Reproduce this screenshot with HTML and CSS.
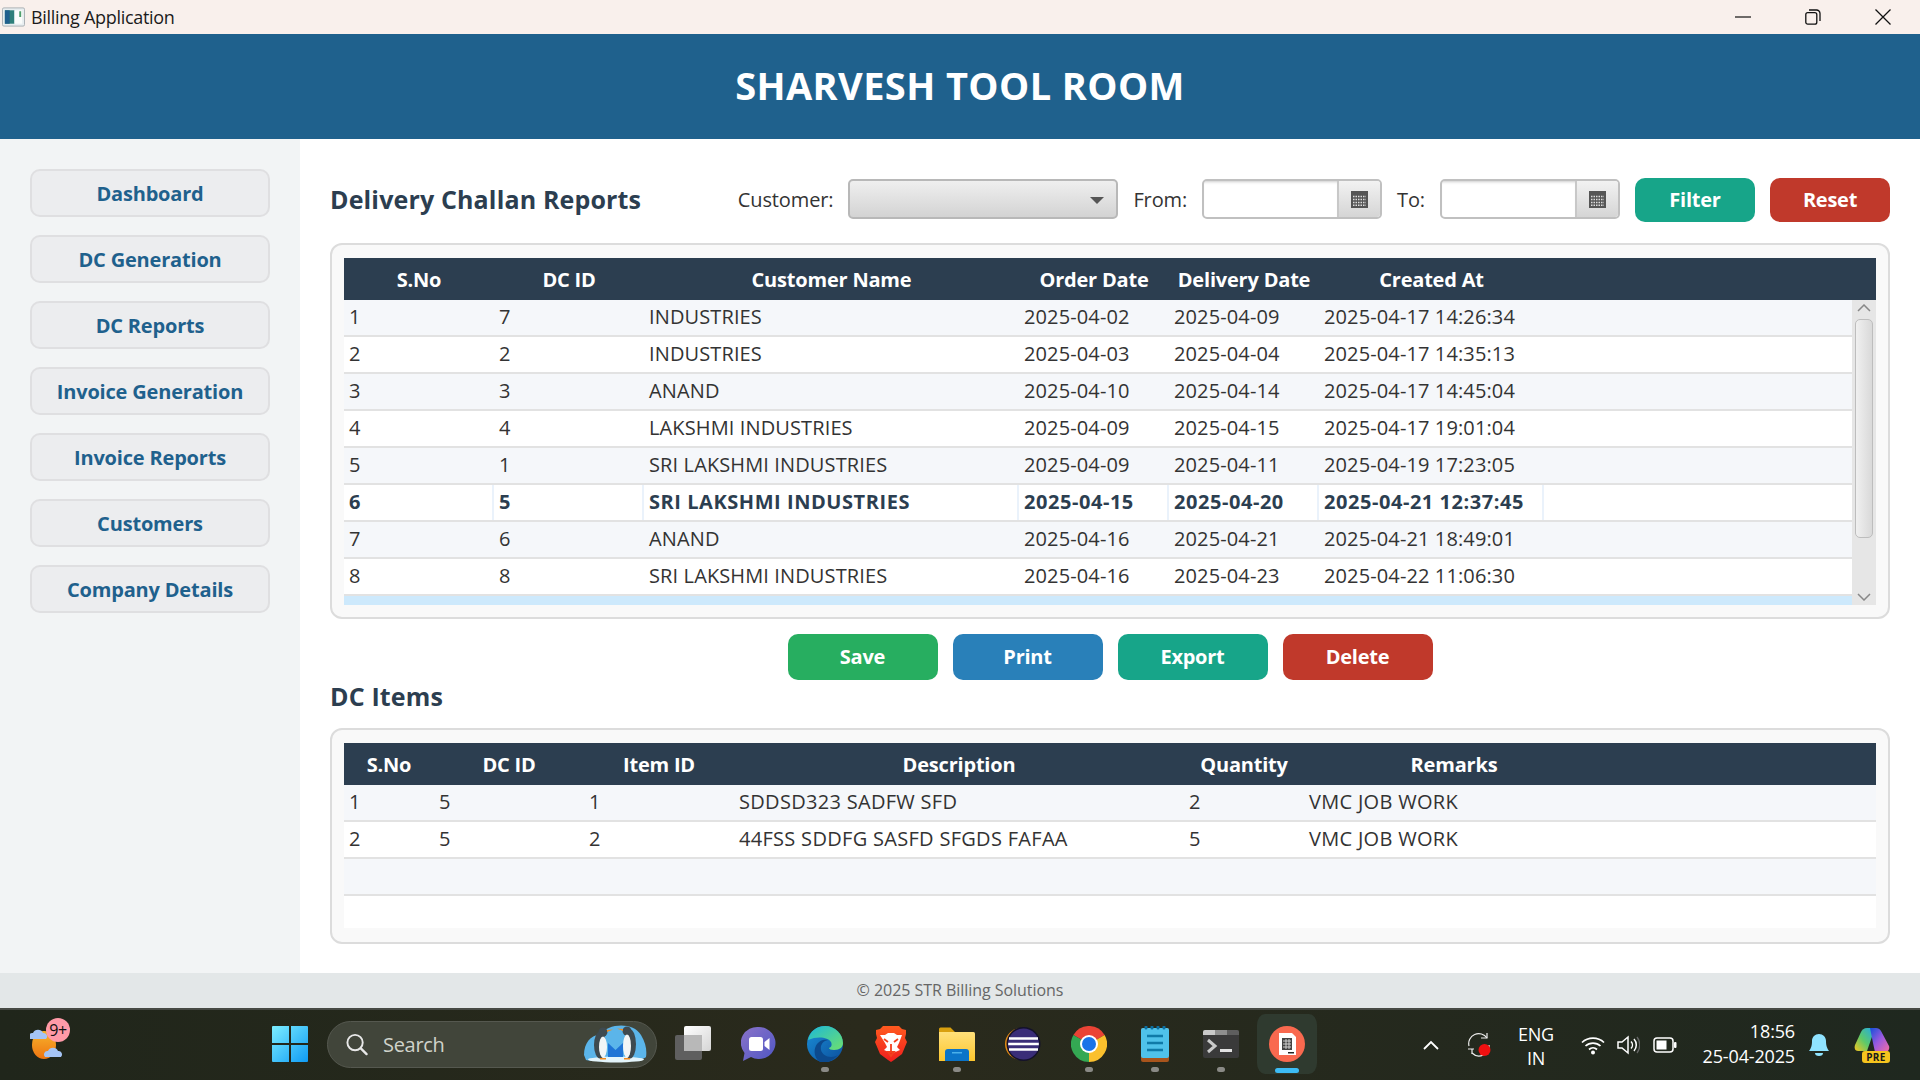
FILE: index.html
```html
<!DOCTYPE html>
<html lang="en">
<head>
<meta charset="utf-8">
<title>Billing Application</title>
<link rel="stylesheet" href="styles.css">
</head>
<body>
<div class="titlebar">
  <svg class="app-ico" viewBox="0 0 24 20"><rect x=".5" y=".5" width="23" height="19" rx="1.5" fill="#e8eef0" stroke="#a8b0b4"/><rect x="3" y="3" width="10" height="14" fill="#2f7f7a"/><rect x="3" y="3" width="5" height="14" fill="#1f5f8d"/><rect x="13" y="3" width="8" height="14" fill="#fbfdfb"/><rect x="18" y="4" width="2" height="6" fill="#4f9f6d"/></svg>
  <span class="app-name">Billing Application</span>
  <div class="win-ctrls">
    <svg class="win-ctrl" viewBox="0 0 16 16"><path d="M0 8h16" stroke="#111" stroke-width="1.2"/></svg>
    <svg class="win-ctrl" viewBox="0 0 16 16"><rect x=".8" y="3.6" width="11" height="11.6" rx="2" fill="none" stroke="#111" stroke-width="1.3"/><path d="M4 1h7.500A3.500 3.500 0 0 1 15 4.500V12" fill="none" stroke="#111" stroke-width="1.3"/></svg>
    <svg class="win-ctrl" viewBox="0 0 16 16"><path d="M.5.500l15 15M15.500.500l-15 15" stroke="#111" stroke-width="1.3"/></svg>
  </div>
</div>
<header class="banner"><span class="banner-text">SHARVESH TOOL ROOM</span></header>
<div class="middle">
  <nav class="sidebar">
    <button class="nav-btn">Dashboard</button>
    <button class="nav-btn">DC Generation</button>
    <button class="nav-btn">DC Reports</button>
    <button class="nav-btn">Invoice Generation</button>
    <button class="nav-btn">Invoice Reports</button>
    <button class="nav-btn">Customers</button>
    <button class="nav-btn">Company Details</button>
  </nav>
  <main class="content">
    <div class="filter-row">
      <h2 class="section-title grow">Delivery Challan Reports</h2>
      <label class="flabel">Customer:</label>
      <div class="combo"><span class="combo-arrow"></span></div>
      <label class="flabel lab-from">From:</label>
      <div class="date">
        <div class="date-field"></div>
        <div class="date-btn"><svg class="cal" viewBox="0 0 17 17"><rect width="17" height="17" fill="#555"/><path d="M2 5.500h13M2 8.500h13M2 11.500h13M2 14.200h13" stroke="#ddd" stroke-width="1.500" stroke-dasharray="1.500 1"/></svg></div>
      </div>
      <label class="flabel lab-to">To:</label>
      <div class="date">
        <div class="date-field"></div>
        <div class="date-btn"><svg class="cal" viewBox="0 0 17 17"><rect width="17" height="17" fill="#555"/><path d="M2 5.500h13M2 8.500h13M2 11.500h13M2 14.200h13" stroke="#ddd" stroke-width="1.500" stroke-dasharray="1.500 1"/></svg></div>
      </div>
      <button class="btn btn-filter teal">Filter</button>
      <button class="btn btn-filter red">Reset</button>
    </div>

    <section class="card card-top">
      <div class="thead t1"><span>S.No</span><span>DC ID</span><span>Customer Name</span><span>Order Date</span><span>Delivery Date</span><span>Created At</span></div>
      <div class="tbody-wrap">
        <div class="tbody">
          <div class="row t1 odd"><span>1</span><span>7</span><span>INDUSTRIES</span><span>2025-04-02</span><span>2025-04-09</span><span>2025-04-17 14:26:34</span></div>
          <div class="row t1"><span>2</span><span>2</span><span>INDUSTRIES</span><span>2025-04-03</span><span>2025-04-04</span><span>2025-04-17 14:35:13</span></div>
          <div class="row t1 odd"><span>3</span><span>3</span><span>ANAND</span><span>2025-04-10</span><span>2025-04-14</span><span>2025-04-17 14:45:04</span></div>
          <div class="row t1"><span>4</span><span>4</span><span>LAKSHMI INDUSTRIES</span><span>2025-04-09</span><span>2025-04-15</span><span>2025-04-17 19:01:04</span></div>
          <div class="row t1 odd"><span>5</span><span>1</span><span>SRI LAKSHMI INDUSTRIES</span><span>2025-04-09</span><span>2025-04-11</span><span>2025-04-19 17:23:05</span></div>
          <div class="row t1 sel"><span>6</span><span>5</span><span>SRI LAKSHMI INDUSTRIES</span><span>2025-04-15</span><span>2025-04-20</span><span>2025-04-21 12:37:45</span></div>
          <div class="row t1 odd"><span>7</span><span>6</span><span>ANAND</span><span>2025-04-16</span><span>2025-04-21</span><span>2025-04-21 18:49:01</span></div>
          <div class="row t1"><span>8</span><span>8</span><span>SRI LAKSHMI INDUSTRIES</span><span>2025-04-16</span><span>2025-04-23</span><span>2025-04-22 11:06:30</span></div>
          <div class="row-partial"></div>
        </div>
        <div class="scrollbar">
          <svg class="sb-arrow" viewBox="0 0 14 8"><path d="M1 7l6-6 6 6" fill="none" stroke="#888" stroke-width="1.500"/></svg>
          <div class="sb-thumb"></div>
          <svg class="sb-arrow sb-down" viewBox="0 0 14 8"><path d="M1 1l6 6 6-6" fill="none" stroke="#888" stroke-width="1.500"/></svg>
        </div>
      </div>
    </section>

    <div class="actions">
      <button class="btn btn-act green">Save</button>
      <button class="btn btn-act blue">Print</button>
      <button class="btn btn-act teal">Export</button>
      <button class="btn btn-act red">Delete</button>
    </div>

    <h2 class="section-title items-title">DC Items</h2>

    <section class="card card-bottom">
      <div class="thead t2"><span>S.No</span><span>DC ID</span><span>Item ID</span><span>Description</span><span>Quantity</span><span>Remarks</span></div>
      <div class="tbody">
        <div class="row t2 odd"><span>1</span><span>5</span><span>1</span><span>SDDSD323 SADFW SFD</span><span>2</span><span>VMC JOB WORK</span></div>
        <div class="row t2"><span>2</span><span>5</span><span>2</span><span>44FSS SDDFG SASFD SFGDS FAFAA</span><span>5</span><span>VMC JOB WORK</span></div>
        <div class="row t2 odd"></div>
        <div class="row-empty"></div>
      </div>
    </section>
  </main>
</div>
<footer class="footer"><span class="footer-text">© 2025 STR Billing Solutions</span></footer>
<div class="taskbar">
  <div class="widget">
    <svg class="weather" viewBox="0 0 36 42"><ellipse cx="14" cy="27" rx="12" ry="14" fill="url(#wg)"/><defs><linearGradient id="wg" x1="0" y1="0" x2="0" y2="1"><stop offset="0" stop-color="#f7b42c"/><stop offset="1" stop-color="#ee7411"/></linearGradient></defs><path d="M0 21a3.500 3.500 0 0 1 3-6 5.500 5.500 0 0 1 10 0 3.500 3.500 0 0 1 3 6z" fill="#a5c4f5"/><path d="M15 39a3.500 3.500 0 0 1 3-6 5.500 5.500 0 0 1 10 0 3.500 3.500 0 0 1 3 6z" fill="#a5c4f5"/></svg>
    <span class="badge">9+</span>
  </div>
  <svg class="start" viewBox="0 0 36 36"><defs><linearGradient id="sg" x1="0" y1="0" x2="1" y2="1"><stop offset="0" stop-color="#7ceeff"/><stop offset="1" stop-color="#0f9bf5"/></linearGradient></defs><path d="M0 1a1 1 0 0 1 1-1h16v17H0zM19 0h16a1 1 0 0 1 1 1v16H19zM0 19h17v17H1a1 1 0 0 1-1-1zM19 19h17v16a1 1 0 0 1-1 1H19z" fill="url(#sg)"/></svg>
  <div class="search">
    <svg class="search-ico" viewBox="0 0 24 24"><circle cx="10.500" cy="10.500" r="8" fill="none" stroke="#e8e8e8" stroke-width="2"/><path d="M16.500 16.500l6 6" stroke="#e8e8e8" stroke-width="2.400" stroke-linecap="round"/></svg>
    <span class="search-text">Search</span>
    <svg class="mascot" viewBox="0 0 64 38"><path d="M1 30C1 18 8 10 16 10 26 -2 50 -3 58 10 63 18 64 26 63 32 60 37 8 37 3 35z" fill="#5bb5ea"/><ellipse cx="33" cy="34.500" rx="28" ry="3" fill="#e3f4fb"/><path d="M25 18l7.500 7 7.500-7v14H25z" fill="#1e74d6"/><ellipse cx="17" cy="20" rx="6" ry="13.500" fill="#3e4a50"/><circle cx="20" cy="7" r="4.500" fill="#3e4a50"/><ellipse cx="20" cy="22" rx="4" ry="10.500" fill="#f2f5f6"/><path d="M24 5l6-.5-6 2.500z" fill="#f08a20"/><path d="M17 33h6v1.500h-6z" fill="#f08a20"/><ellipse cx="47" cy="19" rx="6" ry="14.500" fill="#3e4a50"/><circle cx="44" cy="6" r="4.500" fill="#3e4a50"/><ellipse cx="44" cy="21" rx="4" ry="11.500" fill="#f2f5f6"/><path d="M40 4l-6-.5 6 2.500z" fill="#f08a20"/><path d="M41 33h6v1.500h-6z" fill="#f08a20"/></svg>
  </div>
  <div class="tb-apps">
    <div class="tb-item"><svg class="tb-ico" viewBox="0 0 36 36"><defs><linearGradient id="tv" x1="0" y1="0" x2="1" y2="1"><stop offset="0" stop-color="#fff"/><stop offset="1" stop-color="#d5d5d5"/></linearGradient></defs><rect y="9" width="27" height="25" rx="2" fill="#5f5f5f"/><rect x="9" width="27" height="25" rx="2" fill="url(#tv)"/><rect x="9" y="9" width="18" height="16" fill="#b8b8b8"/></svg></div>
    <div class="tb-item"><svg class="tb-ico" viewBox="0 0 36 36"><defs><linearGradient id="mt" x1="0" y1="0" x2="1" y2="1"><stop offset="0" stop-color="#8a73c9"/><stop offset="1" stop-color="#4f56c4"/></linearGradient></defs><path d="M18 1a16.500 16 0 1 1-8 30L2 35l1.500-8A16.500 16 0 0 1 18 1z" fill="url(#mt)"/><rect x="8" y="11" width="14" height="14" rx="2.500" fill="#fff"/><path d="M23.500 16l5-4v12l-5-4z" fill="#fff"/></svg></div>
    <div class="tb-item"><svg class="tb-ico" viewBox="0 0 36 36"><defs><linearGradient id="eg" x1="0" y1="0" x2="1" y2="1"><stop offset="0" stop-color="#1cb8d8"/><stop offset="1" stop-color="#6ee06e"/></linearGradient><linearGradient id="eb" x1="0" y1="0" x2="1" y2="1"><stop offset="0" stop-color="#1a8fd8"/><stop offset="1" stop-color="#0c4f9c"/></linearGradient></defs><circle cx="18" cy="18" r="18" fill="url(#eb)"/><path d="M1 14C3 5 10 0 18 0c10 0 18 8 18 17 0 4-3 7-9 7-3 0-5-1-5-2 3-1 3-4 2-6-3-5-14-6-23-2z" fill="url(#eg)"/><path d="M13 36c-6-4-7-12-3-18 3-4 7-5 11-4-5 1-8 5-7 10 1 4 5 7 10 7 3 0 5-1 7-2-4 5-12 9-18 7z" fill="#0c4a8e"/></svg><i class="dot"></i></div>
    <div class="tb-item"><svg class="tb-ico tb-brave" viewBox="0 0 32 36"><defs><linearGradient id="br" x1="0" y1="0" x2="0" y2="1"><stop offset="0" stop-color="#ff5a1f"/><stop offset="1" stop-color="#f01e1e"/></linearGradient></defs><path d="M8 0h16l3 3 4 1v4l-1 4 2 4-5 12-8 6-3 2-3-2-8-6-5-12 2-4-1-4V4l4-1z" fill="url(#br)"/><path d="M5 9l5 0 3-2h6l3 2 5 0-3 8-2 4 3 3-7 3-2 0-7-3 3-3-2-4z" fill="#fff"/><path d="M9 13l4 3M23 13l-4 3M16 18v7M13 26l3 4 3-4z" stroke="#f3401e" stroke-width="1.800" fill="none"/></svg></div>
    <div class="tb-item"><svg class="tb-ico" viewBox="0 0 36 36"><path d="M0 3a1.500 1.500 0 0 1 1.500-1.500h10L16 6H0z" fill="#d9a00f"/><defs><linearGradient id="fo" x1="0" y1="0" x2="0" y2="1"><stop offset="0" stop-color="#ffe07a"/><stop offset="1" stop-color="#fcc62e"/></linearGradient></defs><path d="M0 6h34.500a1.500 1.500 0 0 1 1.500 1.500V35H0z" fill="url(#fo)"/><path d="M6 35V26a3 3 0 0 1 3-3h18a3 3 0 0 1 3 3v9z" fill="#0b74c8"/><rect x="13" y="26" width="10" height="1.500" fill="#4ab0ea"/></svg><i class="dot"></i></div>
    <div class="tb-item"><svg class="tb-ico" viewBox="0 0 36 36"><circle cx="16" cy="18" r="16" fill="#e38a13"/><circle cx="18.500" cy="18" r="17" fill="#14122b"/><circle cx="18.500" cy="18" r="15.500" fill="#3a2d78"/><path d="M4 12.500h29M3.200 18h30.600M4 23.500h29" stroke="#fff" stroke-width="2.400"/></svg></div>
    <div class="tb-item"><svg class="tb-ico" viewBox="0 0 36 36"><path d="M18 18L33.600 9A18 18 0 0 0 2.400 9z" fill="#ea4335"/><path d="M18 18L2.400 9A18 18 0 0 0 18 36z" fill="#34a853"/><path d="M18 18L18 36A18 18 0 0 0 33.600 9z" fill="#fbc02d"/><circle cx="18" cy="18" r="9" fill="#fff"/><circle cx="18" cy="18" r="7" fill="#1a73e8"/></svg><i class="dot"></i></div>
    <div class="tb-item"><svg class="tb-ico tb-note" viewBox="0 0 28 36"><rect y="2" width="28" height="34" rx="2" fill="#a8541c"/><rect y="2" width="28" height="30" rx="2" fill="#4fc2ea"/><path d="M5 2v-1M11 2v-1M17 2v-1M23 2v-1" stroke="#0d6fa0" stroke-width="3" stroke-linecap="round"/><path d="M6 10h16M6 17h16M6 24h16" stroke="#0f7aa8" stroke-width="2.400"/></svg><i class="dot"></i></div>
    <div class="tb-item"><svg class="tb-ico tb-term" viewBox="0 0 36 28"><rect width="36" height="28" rx="2" fill="#3a3a3a"/><path d="M0 2a2 2 0 0 1 2-2h10v5H0z" fill="#c9c9c9"/><rect x="12" width="12" height="5" fill="#8f8f8f"/><path d="M24 0h10a2 2 0 0 1 2 2v3H24z" fill="#5e5e5e"/><path d="M5 10l7 6-7 6" fill="none" stroke="#c9c9c9" stroke-width="3"/><rect x="17" y="19" width="12" height="3" fill="#e2e2e2"/></svg><i class="dot"></i></div>
    <div class="tb-item active"><svg class="tb-ico" viewBox="0 0 36 36"><circle cx="18" cy="18" r="18" fill="#f9694f"/><path d="M10 7h13l4 4v18H10z" fill="#fff"/><path d="M13 12h10v12H13z" fill="#444"/><path d="M14 15h8M14 18h8M14 21h8M17 13v10M20 13v10" stroke="#ddd" stroke-width=".9"/><rect x="19" y="26" width="6" height="1.500" fill="#222"/></svg><i class="dot-active"></i></div>
  </div>
  <div class="tray">
    <svg class="t-chev" viewBox="0 0 16 10"><path d="M1 9l7-7 7 7" fill="none" stroke="#fff" stroke-width="1.800"/></svg>
    <svg class="t-sync" viewBox="0 0 24 26"><path d="M2 14a10 10 0 0 1 18-8M22 13a10 10 0 0 1-17 8" fill="none" stroke="#eee" stroke-width="1.200"/><path d="M20 1v5h-6M1 17h6M5 17v5" fill="none" stroke="#eee" stroke-width="1.200"/><circle cx="17.500" cy="18" r="6" fill="#f01010"/></svg>
    <div class="t-lang">ENG<br>IN</div>
    <svg class="t-wifi" viewBox="0 0 24 20"><path d="M1 7.500a16 16 0 0 1 22 0M4.500 11a11 11 0 0 1 15 0M8 14.500a6 6 0 0 1 8 0" fill="none" stroke="#fff" stroke-width="1.700"/><circle cx="12" cy="17.500" r="2" fill="#fff"/></svg>
    <svg class="t-vol" viewBox="0 0 24 20"><path d="M2 7h4l6-5v16l-6-5H2z" fill="none" stroke="#fff" stroke-width="1.500"/><path d="M15 6.500a5 5 0 0 1 0 7M18 4a9 9 0 0 1 0 12" fill="none" stroke="#fff" stroke-width="1.500"/><path d="M21 2a13 13 0 0 1 0 16" fill="none" stroke="#666" stroke-width="1.300"/></svg>
    <svg class="t-bat" viewBox="0 0 24 16"><rect x="1" y="1" width="19" height="14" rx="3" fill="none" stroke="#fff" stroke-width="1.500"/><rect x="3.500" y="3.500" width="10" height="9" fill="#fff"/><rect x="21" y="5" width="2.500" height="6" rx="1" fill="#fff"/></svg>
    <div class="t-clock">18:56<br>25-04-2025</div>
    <svg class="t-bell" viewBox="0 0 22 24"><path d="M11 1c4 0 7 3 7 7 0 5 1 7 3 10H1c2-3 3-5 3-10 0-4 3-7 7-7z" fill="#8fe3ff"/><path d="M7 20h8a4 3 0 0 1-8 0z" fill="#8fe3ff"/></svg>
    <svg class="t-copilot" viewBox="0 0 36 36"><defs><linearGradient id="c1" x1="1" y1="0" x2="0" y2="1"><stop offset="0" stop-color="#1fa8ee"/><stop offset=".55" stop-color="#5cc96a"/><stop offset="1" stop-color="#f6c51e"/></linearGradient><linearGradient id="c2" x1="0" y1="0" x2="1" y2="1"><stop offset="0" stop-color="#1250d8"/><stop offset=".5" stop-color="#9a5ae0"/><stop offset="1" stop-color="#f56ea0"/></linearGradient></defs><path d="M7 5c1-2 3-4 6-4h8l-8 23H4C1 24 0 21 1 18z" fill="url(#c1)"/><path d="M16 1h6c2 0 4 1 5 3l8 15c1 3-1 6-4 6H21l-2-9z" fill="url(#c2)"/><rect x="8" y="24" width="28" height="12" rx="3" fill="#f6c51e"/><text x="22" y="33.500" class="pre">PRE</text></svg>
  </div>
</div>
</body>
</html>
```

FILE: styles.css
```css
* { box-sizing: border-box; }
html, body { margin: 0; padding: 0; }
body {
  width: 1920px;
  height: 1080px;
  overflow: hidden;
  display: flex;
  flex-direction: column;
  font-family: "Open Sans", "Noto Sans", sans-serif;
  color: #2c3e50;
  background: #fff;
}

/* title bar */
.titlebar { height: 34px; flex: none; display: flex; align-items: center; background: #f9f0ec; padding-left: 2px; }
.app-ico { width: 23px; height: 20px; }
.app-name { margin-left: 6px; font-size: 18px; letter-spacing: -.3px; color: #1b1b1b; }
.win-ctrls { margin-left: auto; display: flex; align-items: center; padding-right: 29px; }
.win-ctrl { width: 16px; height: 16px; margin-left: 54px; }

/* banner */
.banner { height: 105px; flex: none; display: flex; align-items: center; justify-content: center; background: #1f618d; color: #fff; font-size: 38px; font-weight: 700; letter-spacing: .4px; }
.banner-text { margin-bottom: 4px; }

.middle { flex: 1; display: flex; min-height: 0; }

/* sidebar */
.sidebar { width: 300px; flex: none; background: #f2f4f5; padding: 30px 30px 0; display: flex; flex-direction: column; gap: 18px; }
.nav-btn { height: 48px; width: 240px; border: 2px solid #dfdfe1; border-radius: 10px; background: #ecedef; color: #1f618d; font: 700 20px "Open Sans", sans-serif; letter-spacing: -.18px; padding: 0; }

/* content */
.content { flex: 1; min-width: 0; padding: 39px 30px 0; }
.filter-row { display: flex; align-items: center; height: 44px; }
.grow { flex: 1; }
.section-title { margin: 0 0 2px; font-size: 25px; font-weight: 700; letter-spacing: .15px; color: #2c3e50; }
.flabel { font-size: 20px; letter-spacing: -.13px; color: #333; white-space: nowrap; margin-bottom: 2px; }
.lab-from { margin-left: 15px; }
.lab-to { margin-left: 15px; }
.combo { width: 270px; height: 40px; margin: 0 0 2px 15px; border: 2px solid #b8b8b8; border-radius: 5px; background: linear-gradient(#efefef, #d3d3d3); position: relative; }
.combo-arrow { position: absolute; right: 12px; top: 16px; border-left: 7px solid transparent; border-right: 7px solid transparent; border-top: 7px solid #555; }
.date { width: 180px; height: 40px; margin: 0 0 2px 15px; display: flex; border: 2px solid #c0c0c0; border-radius: 5px; background: #fff; overflow: hidden; }
.date-field { flex: 1; box-shadow: inset 0 3px 3px -2px #ccc; }
.date-btn { width: 43px; border-left: 2px solid #c8c8c8; background: linear-gradient(#f2f2f2, #d5d5d5); display: flex; align-items: center; justify-content: center; }
.cal { width: 17px; height: 17px; }

.btn { border: 0; border-radius: 10px; color: #fff; font: 700 20px "Open Sans", sans-serif; letter-spacing: -.25px; padding: 0 0 2px; }
.btn-filter { width: 120px; height: 44px; margin-left: 15px; }
.btn-act { width: 150px; height: 46px; }
.teal { background: #17a589; }
.red { background: #c0392b; }
.green { background: #27ae60; }
.blue { background: #2980b9; }

/* cards */
.card { border: 2px solid #dcdcdc; border-radius: 12px; background: #f9f9f9; padding: 13px 12px 12px; }
.card-top { margin-top: 21px; height: 376px; }
.card-bottom { height: 216px; }
.thead { height: 42px; background: #2c3e50; color: #fff; font-size: 20px; font-weight: 700; letter-spacing: -.2px; align-items: center; text-align: center; }
.t1 { display: grid; grid-template-columns: 150px 150px 375px 150px 150px 225px; }
.t2 { display: grid; grid-template-columns: 90px 150px 150px 450px 120px 300px; }
.tbody-wrap { display: flex; height: 305px; }
.tbody { flex: 1; min-width: 0; display: flex; flex-direction: column; }
.row { height: 37px; flex: none; background: #fff; border-bottom: 2px solid #e2e2e2; font-size: 20px; letter-spacing: .12px; color: #333; align-items: center; }
.row.t2 { letter-spacing: .3px; }
.row span { padding: 0 0 3px 5px; white-space: nowrap; height: 100%; display: flex; align-items: center; }
.odd { background: #f5f7fa; }
.row.sel { font-weight: 700; color: #2c3e50; letter-spacing: .55px; }
.sel span { border-right: 2px solid #eaf2fb; }
.row-partial { flex: 1; background: #cde9fc; }
.row-empty { height: 32px; background: #fff; }

/* scrollbar */
.scrollbar { width: 24px; flex: none; background: #e6e6e6; position: relative; display: flex; flex-direction: column; align-items: center; padding-top: 4px; }
.sb-arrow { width: 14px; height: 8px; flex: none; }
.sb-thumb { width: 18px; height: 219px; margin-top: 7px; border: 1px solid #bdbdbd; border-radius: 5px; background: linear-gradient(90deg, #f0f0f0, #d9d9d9); }
.sb-down { margin-top: auto; margin-bottom: 4px; }

.actions { display: flex; justify-content: center; gap: 15px; margin-top: 15px; }
.items-title { height: 34px; line-height: 32px; margin: 0 0 14px; }

.footer { height: 35px; flex: none; display: flex; align-items: center; justify-content: center; background: #e3e7e8; font-size: 16px; letter-spacing: -.04px; color: #666; }
.footer-text { margin-bottom: 2px; }

/* taskbar */
.taskbar { height: 72px; flex: none; display: flex; align-items: center; background: linear-gradient(90deg, #20261b, #2a2a1c 45%, #1f281f); border-top: 2px solid #474a44; color: #fff; }
.widget { width: 272px; height: 100%; flex: none; position: relative; }
.weather { position: absolute; left: 30px; top: 8px; width: 36px; height: 42px; }
.badge { position: absolute; left: 46px; top: 8px; width: 24px; height: 24px; border-radius: 50%; background: #ff9aa8; color: #111; font-size: 16px; display: flex; align-items: center; justify-content: center; letter-spacing: -.5px; }
.start { width: 36px; height: 36px; flex: none; margin-bottom: 2px; }
.search { width: 330px; height: 47px; flex: none; margin: 0 0 2px 19px; border-radius: 24px; background: #41453a; border: 1px solid #55584f; display: flex; align-items: center; padding-left: 17px; position: relative; }
.search-ico { width: 23px; height: 24px; }
.search-text { margin-left: 15px; font-size: 20px; color: #d0d3ca; letter-spacing: -.3px; }
.mascot { margin-left: auto; margin-right: 9px; width: 64px; height: 38px; }
.tb-apps { display: flex; margin: 0 0 2px 3px; }
.tb-item { width: 66px; height: 60px; display: flex; align-items: center; justify-content: center; position: relative; }
.tb-ico { width: 36px; height: 36px; }
.tb-brave { width: 32px; }
.tb-note { width: 28px; }
.tb-term { height: 28px; }
.active { padding: 0 3px; background: #2f3a2f content-box; border-radius: 11px; }
.dot { position: absolute; bottom: 2px; left: 29px; width: 8px; height: 5px; border-radius: 3px; background: #8a8a86; }
.dot-active { position: absolute; bottom: 1px; left: 21px; width: 24px; height: 5px; border-radius: 3px; background: #3dbcf5; }
.tray { display: flex; align-items: center; margin-left: 103px; flex: none; }
.t-chev { width: 16px; height: 10px; }
.t-sync { width: 24px; height: 26px; margin-left: 28px; }
.t-lang { width: 50px; margin-left: 20px; padding-top: 1px; font-size: 18px; line-height: 24px; text-align: center; letter-spacing: -.2px; }
.t-wifi { width: 24px; height: 20px; margin-left: 20px; }
.t-vol { width: 24px; height: 20px; margin-left: 11px; }
.t-bat { width: 24px; height: 16px; margin-left: 13px; }
.t-clock { width: 118px; margin-bottom: 2px; font-size: 18px; line-height: 25px; text-align: right; letter-spacing: -.15px; }
.t-bell { width: 22px; height: 24px; margin-left: 13px; }
.t-copilot { width: 36px; height: 36px; margin-left: 24px; }
.pre { font: 700 10px "Open Sans", sans-serif; fill: #1a1a1a; text-anchor: middle; letter-spacing: .4px; }
```
